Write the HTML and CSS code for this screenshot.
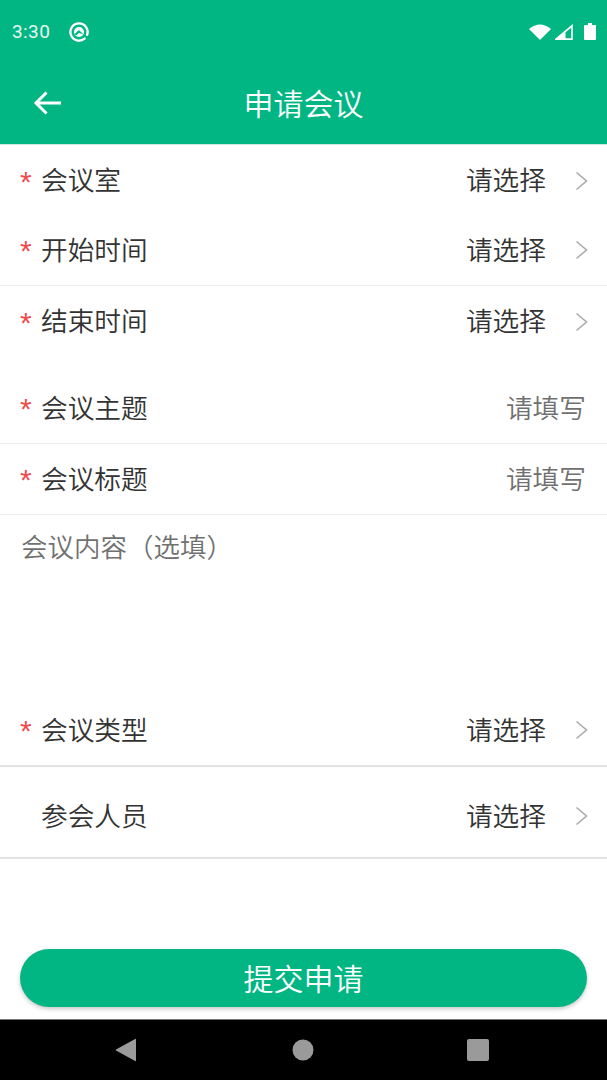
FILE: index.html
```html
<!DOCTYPE html>
<html lang="zh">
<head>
<meta charset="utf-8">
<title>申请会议</title>
<link rel="stylesheet" href="styles.css">
</head>
<body>
<div class="app">
  <header class="header">
    <div class="status">
      <div class="status-left">
        <span class="clock">3:30</span>
        <svg class="q-icon" width="22" height="20" viewBox="0 0 22 20">
          <path d="M16.530 16.590A8.600 8.600 0 1 1 19.080 12.940" fill="none" stroke="#fff" stroke-width="2.400" stroke-linecap="round"/>
          <circle cx="11" cy="10" r="5" fill="#fff"/>
          <path d="M6.500 12 L11 8 L15.500 12.500 L11 10.900 L8 13.400Z" fill="#01b683"/>
        </svg>
      </div>
      <div class="status-right">
        <svg class="wifi" width="22" height="16" viewBox="0 0 22 16"><path d="M0 5 Q11 -4 22 5 L11 16Z" fill="#fff"/></svg>
        <svg width="18" height="16" viewBox="0 0 18 16"><path d="M1 15.100 L17 1.800 V15.100Z" fill="none" stroke="#fff" stroke-width="1.600"/><path d="M1 15.100 L10.500 7.200 V16 H1Z" fill="#fff"/></svg>
        <svg class="battery" width="12" height="17" viewBox="0 0 12 17"><path d="M4 0h4v2h3a1 1 0 0 1 1 1v13a1 1 0 0 1-1 1H1a1 1 0 0 1-1-1V3a1 1 0 0 1 1-1h3Z" fill="#fff"/></svg>
      </div>
    </div>
    <div class="toolbar">
      <svg class="back" width="30" height="26" viewBox="0 0 30 26"><path d="M28 13H3M13.500 2.500L3 13l10.500 10.500" fill="none" stroke="#fff" stroke-width="3"/></svg>
      <h1 class="title">申请会议</h1>
    </div>
  </header>

  <main class="form">
    <section class="group">
      <div class="row row-plain"><span class="star">*</span><span class="label">会议室</span><span class="value">请选择</span><svg class="chev" width="13" height="20" viewBox="0 0 13 20"><path d="M1.500 1.500L11.500 10L1.500 18.500" fill="none" stroke="#a8a8a8" stroke-width="1.500"/></svg></div>
      <div class="row"><span class="star">*</span><span class="label">开始时间</span><span class="value">请选择</span><svg class="chev" width="13" height="20" viewBox="0 0 13 20"><path d="M1.500 1.500L11.500 10L1.500 18.500" fill="none" stroke="#a8a8a8" stroke-width="1.500"/></svg></div>
      <div class="row row-plain"><span class="star">*</span><span class="label">结束时间</span><span class="value">请选择</span><svg class="chev" width="13" height="20" viewBox="0 0 13 20"><path d="M1.500 1.500L11.500 10L1.500 18.500" fill="none" stroke="#a8a8a8" stroke-width="1.500"/></svg></div>
    </section>

    <section class="group group-inputs">
      <div class="row"><span class="star">*</span><span class="label">会议主题</span><span class="hint">请填写</span></div>
      <div class="row"><span class="star">*</span><span class="label">会议标题</span><span class="hint">请填写</span></div>
      <div class="notes">会议内容（选填）</div>
    </section>

    <section class="group">
      <div class="row row-strong"><span class="star">*</span><span class="label">会议类型</span><span class="value">请选择</span><svg class="chev" width="13" height="20" viewBox="0 0 13 20"><path d="M1.500 1.500L11.500 10L1.500 18.500" fill="none" stroke="#a8a8a8" stroke-width="1.500"/></svg></div>
      <div class="row row-strong row-tall"><span class="star"></span><span class="label">参会人员</span><span class="value">请选择</span><svg class="chev" width="13" height="20" viewBox="0 0 13 20"><path d="M1.500 1.500L11.500 10L1.500 18.500" fill="none" stroke="#a8a8a8" stroke-width="1.500"/></svg></div>
    </section>
  </main>

  <div class="actions"><button class="submit" type="button">提交申请</button></div>

  <nav class="navbar">
    <svg class="nav-back" width="22" height="24" viewBox="0 0 22 24"><path d="M21 1.500V22.500a.6.6 0 0 1-.9.5L1 12.500a.6.6 0 0 1 0-1L20.100 1a.6.6 0 0 1 .9.5Z" fill="#9a9a9a"/></svg>
    <svg width="22" height="22" viewBox="0 0 22 22"><circle cx="11" cy="11" r="10.500" fill="#9a9a9a"/></svg>
    <svg width="22" height="22" viewBox="0 0 22 22"><rect x="0" y="0" width="22" height="22" rx="2" fill="#9a9a9a"/></svg>
  </nav>
</div>
</body>
</html>
```

FILE: styles.css
```css
* { box-sizing: border-box; }

html, body {
  margin: 0;
  padding: 0;
  background: #fff;
}

.app {
  width: 607px;
  height: 1080px;
  display: flex;
  flex-direction: column;
  overflow: hidden;
  font-family: "Noto Sans CJK SC", "Roboto", sans-serif;
  font-weight: 350;
}

.header {
  height: 145px;
  flex: none;
  background: #01b683;
  border-bottom: 1px solid #cfe9df;
  color: #fff;
}

.status {
  height: 63px;
  padding: 0 11px 0 12px;
  display: flex;
  align-items: center;
  justify-content: space-between;
}

.status-left {
  display: flex;
  align-items: center;
  gap: 18px;
}

.clock {
  font-family: "Roboto", sans-serif;
  font-size: 19px;
  font-weight: 400;
  letter-spacing: 0.4px;
  color: #e6f8f1;
}

.status-right {
  display: flex;
  align-items: center;
  gap: 4px;
}

.battery { margin-left: 7px; }

.toolbar {
  height: 81px;
  display: flex;
  align-items: center;
  justify-content: center;
  position: relative;
}

.back {
  position: absolute;
  left: 33px;
  top: 27px;
}

.title {
  margin: 0;
  font-size: 30px;
  font-weight: 350;
  line-height: 1;
  position: relative;
  top: -2px;
}

.form {
  flex: none;
  height: 714px;
}

.group-inputs {
  margin-top: 17px;
}

.row {
  height: 71px;
  display: flex;
  align-items: center;
  padding: 0 19px 4px 20px;
  border-bottom: 1px solid #ececec;
  font-size: 26.700px;
}

.row-plain { border-bottom-color: transparent; height: 70px; padding-bottom: 2px; }
.row-strong { border-bottom: 2px solid #e4e4e4; padding-bottom: 5px; height: 71px; }
.row-tall { height: 92px; padding-bottom: 0; padding-top: 4px; }

.star {
  width: 21px;
  flex: none;
  color: #ee4c4f;
  font-family: "Liberation Sans", sans-serif;
  font-size: 30px;
  line-height: 1;
  position: relative;
  top: 3px;
}

.label {
  color: #333;
}

.value {
  margin-left: auto;
  color: #333;
}

.hint {
  margin-left: auto;
  margin-right: 2px;
  color: #707070;
}

.chev {
  flex: none;
  margin-left: 29px;
  margin-top: 4px;
}

.notes {
  height: 181px;
  padding: 12px 21px 0;
  color: #707070;
  font-size: 26.500px;
  line-height: 38px;
}

.actions {
  flex: 1;
  padding: 90px 20px 0;
}

.submit {
  width: 567px;
  height: 58px;
  display: block;
  border: 0;
  padding: 0 0 2px;
  border-radius: 29px;
  background: #01b683;
  color: #fff;
  font-family: inherit;
  font-weight: 350;
  font-size: 30px;
  line-height: 1;
  box-shadow: 0 2px 4px rgba(0, 0, 0, 0.22);
}

.navbar {
  flex: none;
  height: 61px;
  padding-right: 2px;
  background: #000;
  border-top: 1px solid #777;
  display: flex;
  align-items: center;
  justify-content: center;
  gap: 153px;
}

.nav-back { position: relative; left: -2px; }
```
